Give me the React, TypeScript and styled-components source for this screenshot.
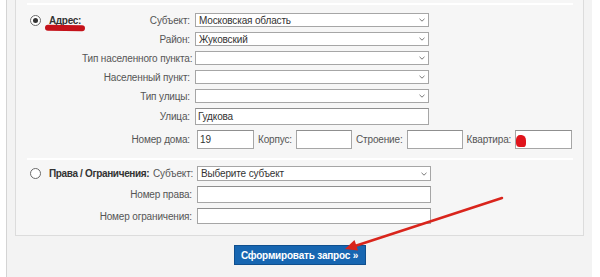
import styled, { createGlobalStyle } from "styled-components";

const GlobalStyle = createGlobalStyle`
  html, body {
    margin: 0;
    padding: 0;
    background: #ffffff;
  }
  body {
    font-family: "Liberation Sans", Arial, sans-serif;
    font-size: 10px;
    letter-spacing: -0.15px;
    color: #4a4a4a;
  }
`;

const Page = styled.div`
  position: relative;
  width: 600px;
  height: 277px;
  overflow: hidden;
`;

const Panel = styled.div`
  margin-left: 6px;
  width: 586px;
  height: 277px;
  box-sizing: border-box;
  background: #f3f3f3;
  border-left: 1px solid #d4d4d4;
  padding: 0 8px;
`;

const FormBox = styled.div`
  width: 569px;
  box-sizing: border-box;
  background: #f6f6f6;
  border: 1px solid #dcdcdc;
  border-top: none;
  padding: 3px 10px 0 11px;
`;

const Section = styled.div<{ $cols: string; $pad: string }>`
  display: grid;
  grid-template-columns: ${(p) => p.$cols};
  column-gap: 5px;
  row-gap: 5px;
  align-items: center;
  border-top: 2px solid #ffffff;
  padding: ${(p) => p.$pad};
`;

const TitleCell = styled.div`
  display: flex;
  align-items: center;
  gap: 8px;
  white-space: nowrap;
`;

const Radio = styled.span<{ $checked?: boolean }>`
  position: relative;
  margin-left: 3px;
  width: 9px;
  height: 9px;
  border-radius: 50%;
  border: 1px solid #6a6a6a;
  background: #fff;
  flex: none;
  &::after {
    content: "";
    display: ${(p) => (p.$checked ? "block" : "none")};
    position: absolute;
    left: 2px;
    top: 2px;
    width: 5px;
    height: 5px;
    border-radius: 50%;
    background: #333;
  }
`;

const Title = styled.span`
  position: relative;
  font-weight: bold;
  letter-spacing: -0.35px;
  color: #333;
`;

const Scribble = styled.span`
  position: absolute;
  left: -4px;
  top: 10px;
  width: 40px;
  height: 6px;
  border-radius: 3px;
  background: #c4121a;
  transform: rotate(1deg);
`;

const Label = styled.div<{ $span?: boolean }>`
  grid-column: ${(p) => (p.$span ? "1 / 3" : "auto")};
  text-align: right;
  white-space: nowrap;
  color: #555;
`;

const Select = styled.div<{ $h: number }>`
  width: 234px;
  height: ${(p) => p.$h}px;
  box-sizing: border-box;
  border: 1px solid #a6a6a6;
  background: #fff;
  display: flex;
  align-items: center;
  justify-content: space-between;
  padding: 0 3px 0 3px;
  color: #333;
  white-space: nowrap;
`;

const Chevron = () => (
  <svg width="6" height="4" viewBox="0 0 6 4">
    <path d="M0.5 0.8 L3 3.2 L5.5 0.8" fill="none" stroke="#777" strokeWidth="1" />
  </svg>
);

const TextInput = styled.input<{ $w: number; $h: number }>`
  width: ${(p) => p.$w}px;
  height: ${(p) => p.$h}px;
  box-sizing: border-box;
  margin: 0;
  border: 1px solid #a6a6a6;
  border-top-color: #8f8f8f;
  background: #fff;
  padding: 0 2px;
  font-family: "Liberation Sans", Arial, sans-serif;
  font-size: 10px;
  letter-spacing: -0.15px;
  color: #333;
  outline: none;
`;

const HouseRow = styled.div`
  display: flex;
  align-items: center;
  gap: 4px;
  padding-left: 2px;
`;

const InlineLabel = styled.span`
  color: #555;
`;

const Marked = styled.span`
  position: relative;
  display: inline-flex;
`;

const Blot = styled.span`
  position: absolute;
  left: 1px;
  top: 5px;
  width: 10px;
  height: 12px;
  border-radius: 40% 45% 30% 35%;
  background: #e0141c;
`;

const Footer = styled.div`
  display: flex;
  justify-content: center;
  padding-top: 9px;
`;

const SubmitButton = styled.button`
  height: 20px;
  width: 132px;
  box-sizing: border-box;
  border: 1px solid #0f4f8e;
  background: #1766b1;
  color: #fff;
  font-family: "Liberation Sans", Arial, sans-serif;
  font-size: 10px;
  font-weight: bold;
  letter-spacing: -0.2px;
  padding: 0;
  cursor: pointer;
`;

const Overlay = styled.svg`
  position: absolute;
  left: 0;
  top: 0;
  pointer-events: none;
`;

export default function App() {
  return (
    <>
      <GlobalStyle />
      <Page>
        <Panel>
          <FormBox>
            <Section $cols="50px 108px 1fr" $pad="8px 0 9px 0">
              <TitleCell>
                <Radio $checked />
                <Title>
                  Адрес:
                  <Scribble />
                </Title>
              </TitleCell>
              <Label>Субъект:</Label>
              <Select $h={14}>
                Московская область
                <Chevron />
              </Select>

              <div />
              <Label>Район:</Label>
              <Select $h={14}>
                Жуковский
                <Chevron />
              </Select>

              <div />
              <Label>Тип населенного пункта:</Label>
              <Select $h={14}>
                <span />
                <Chevron />
              </Select>

              <div />
              <Label>Населенный пункт:</Label>
              <Select $h={14}>
                <span />
                <Chevron />
              </Select>

              <div />
              <Label>Тип улицы:</Label>
              <Select $h={14}>
                <span />
                <Chevron />
              </Select>

              <div />
              <Label>Улица:</Label>
              <TextInput $w={234} $h={17} defaultValue="Гудкова" readOnly />

              <div />
              <Label>Номер дома:</Label>
              <HouseRow>
                <TextInput $w={57} $h={19} defaultValue="19" readOnly />
                <InlineLabel>Корпус:</InlineLabel>
                <TextInput $w={56} $h={19} readOnly />
                <InlineLabel>Строение:</InlineLabel>
                <TextInput $w={56} $h={19} readOnly />
                <InlineLabel>Квартира:</InlineLabel>
                <Marked>
                  <TextInput $w={57} $h={19} readOnly />
                  <Blot />
                </Marked>
              </HouseRow>
            </Section>

            <Section $cols="121px 39px 1fr" $pad="6px 0 11px 0">
              <TitleCell>
                <Radio />
                <Title>Права / Ограничения:</Title>
              </TitleCell>
              <Label>Субъект:</Label>
              <Select $h={15}>
                Выберите субъект
                <Chevron />
              </Select>

              <Label $span>Номер права:</Label>
              <TextInput $w={234} $h={17} readOnly />

              <Label $span>Номер ограничения:</Label>
              <TextInput $w={234} $h={16} readOnly />
            </Section>
          </FormBox>
          <Footer>
            <SubmitButton>Сформировать запрос »</SubmitButton>
          </Footer>
        </Panel>
        <Overlay width="600" height="277">
          <line x1="502" y1="198" x2="355" y2="246" stroke="#d9251c" strokeWidth="2.5" strokeLinecap="round" />
          <polygon points="345,249 358,250.5 354.5,240" fill="#d9251c" />
        </Overlay>
      </Page>
    </>
  );
}
